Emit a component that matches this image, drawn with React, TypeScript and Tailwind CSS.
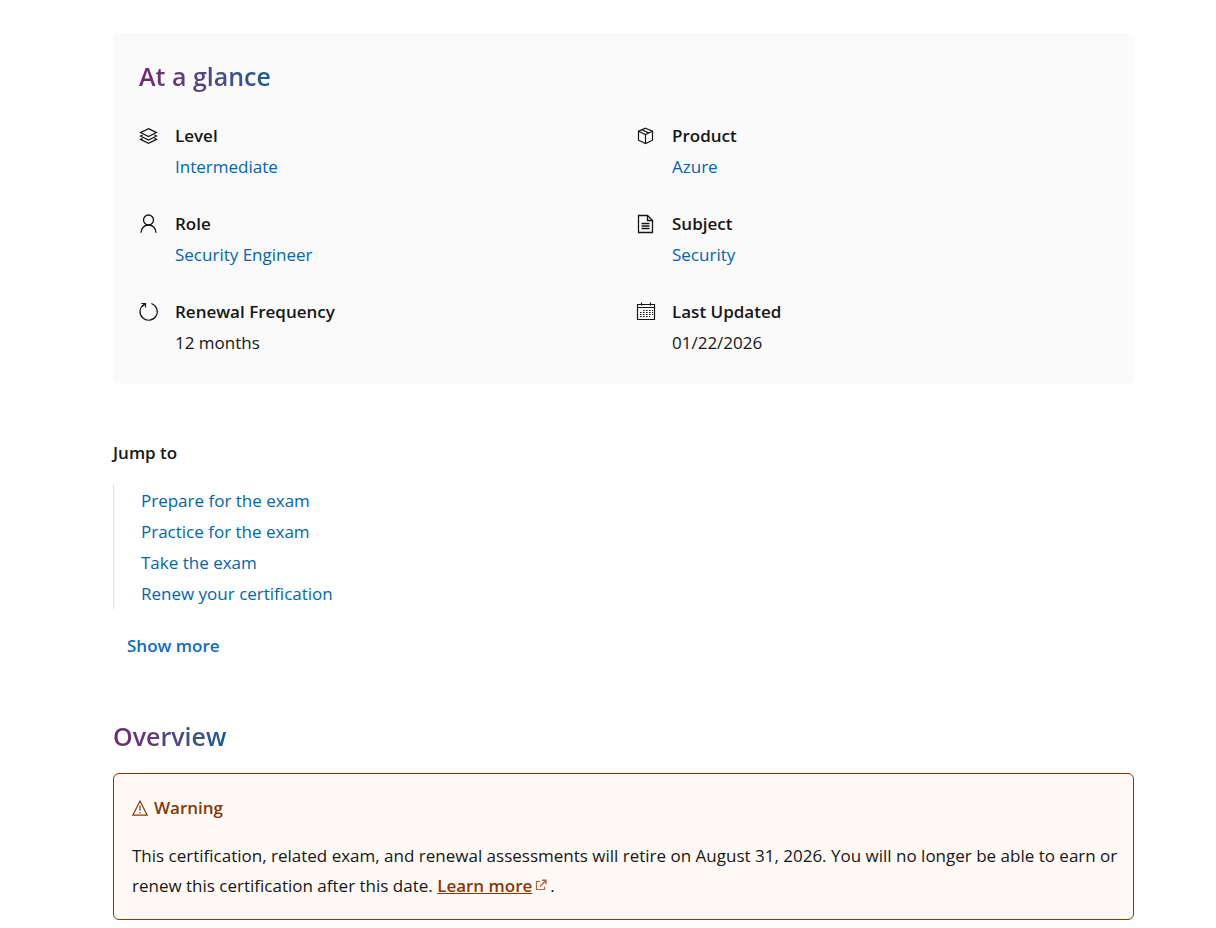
import React from 'react'

interface FactProps {
  icon: React.ReactNode
  label: string
  value: string
  href?: string
}

const iconProps = {
  viewBox: '0 0 20 20',
  fill: 'none',
  stroke: 'currentColor',
  'aria-hidden': true,
}

const LevelIcon = () => (
  <svg {...iconProps} className="w-5 h-5" strokeWidth={1.2}>
    <path d="M9.5 2.6 17.5 6.6 9.5 10.6 1.5 6.6z" />
    <path d="M3.6 9 1.5 10 9.5 14 17.5 10 15.4 9" />
    <path d="M3.6 12.4 1.5 13.4 9.5 17.4 17.5 13.4 15.4 12.4" />
  </svg>
)

const ProductIcon = () => (
  <svg {...iconProps} className="w-5 h-5" strokeWidth={1.2}>
    <path d="M9.5 2.2 16.5 5.2V14.2L9.5 17.6 2.5 14.2V5.2z" />
    <path d="M2.5 5.2 9.5 8.6 16.5 5.2M9.5 8.6V17.6M5.9 3.8 13 7.1" />
  </svg>
)

const RoleIcon = () => (
  <svg {...iconProps} className="w-5 h-5" strokeWidth={1.3}>
    <circle cx="9.5" cy="6" r="5" />
    <path d="M2 18.8C2 14.3 5.2 11 9.5 11S17 14.3 17 18.8" />
  </svg>
)

const SubjectIcon = () => (
  <svg {...iconProps} className="w-5 h-5" strokeWidth={1.3}>
    <path d="M2.5 1.5H11.5L16.5 6.5V18.5H2.5z" />
    <path d="M11.5 1.5V6.5H16.5M5.5 9.5H13.5M5.5 12H13.5M5.5 14.5H13.5" />
  </svg>
)

const RenewalIcon = () => (
  <svg {...iconProps} className="w-5 h-5" strokeWidth={1.2}>
    <path d="M12.4 1.5A8.6 8.6 0 1 1 5 2.4" />
    <path d="M2.4 1.5H6.5V5.6M6.3 1.7 3 4.6" />
  </svg>
)

const CalendarIcon = () => (
  <svg {...iconProps} className="w-5 h-5" strokeWidth={1.2}>
    <path d="M1.5 2.5H18.5V17.5H1.5zM1.5 5.5H18.5M5.5 0.5V3.5M14.5 0.5V3.5" />
    <path d="M7 8.5H17M4 10.5H17M4 12.5H17M4 14.5H14" strokeDasharray="1.6 1.4" />
  </svg>
)

const WarningIcon = () => (
  <svg viewBox="0 0 16 16" fill="none" stroke="currentColor" className="w-4 h-4" aria-hidden="true">
    <path d="M8 1 15.2 15.2H0.8z" strokeWidth={1.2} />
    <path d="M8 5.5V10.8M8 12V13.3" strokeWidth={1.2} />
  </svg>
)

const ExternalIcon = () => (
  <svg viewBox="0 0 12 12" fill="none" stroke="currentColor" className="inline w-3 h-3 mx-[3px] mb-1 text-[#8a3707] opacity-75" aria-hidden="true">
    <path d="M5 2.5H1.5V10.5H9.5V7.5" strokeWidth={1.2} />
    <path d="M7 1.2H11V5.2M10.8 1.4 4.8 7.4" strokeWidth={1.4} />
  </svg>
)

const facts: FactProps[] = [
  { icon: <LevelIcon />, label: 'Level', value: 'Intermediate', href: '#level' },
  { icon: <ProductIcon />, label: 'Product', value: 'Azure', href: '#product' },
  { icon: <RoleIcon />, label: 'Role', value: 'Security Engineer', href: '#role' },
  { icon: <SubjectIcon />, label: 'Subject', value: 'Security', href: '#subject' },
  { icon: <RenewalIcon />, label: 'Renewal Frequency', value: '12 months' },
  { icon: <CalendarIcon />, label: 'Last Updated', value: '01/22/2026' },
]

const jumpLinks = [
  { label: 'Prepare for the exam', href: '#prepare' },
  { label: 'Practice for the exam', href: '#practice' },
  { label: 'Take the exam', href: '#take' },
  { label: 'Renew your certification', href: '#renew' },
]

const GradientHeading: React.FC<{ children: React.ReactNode }> = ({ children }) => (
  <h2 className="w-fit text-[25px] leading-[34px] font-semibold text-transparent bg-clip-text bg-linear-to-r from-[#702573] to-[#0f5b90]">
    {children}
  </h2>
)

const Fact: React.FC<FactProps> = ({ icon, label, value, href }) => (
  <div className="flex gap-4">
    <div className="flex items-center h-[31px]">{icon}</div>
    <dl>
      <dt className="font-semibold">{label}</dt>
      <dd>
        {href ? <a href={href} className="text-[#0065b3] hover:underline">{value}</a> : value}
      </dd>
    </dl>
  </div>
)

export default function App() {
  return (
    <main className="pl-[113px] pr-[82px] pt-[33px] pb-2 bg-white text-[#161616] text-[17px] leading-[31px] font-['Open_Sans','Segoe_UI',sans-serif]">
      <section className="rounded-md bg-[#fafafa] p-[26px]">
        <GradientHeading>At a glance</GradientHeading>
        <div className="mt-[27px] grid grid-cols-2 gap-x-[25px] gap-y-[26px]">
          {facts.map((fact) => (
            <Fact key={fact.label} {...fact} />
          ))}
        </div>
      </section>

      <nav className="mt-[53px]" aria-labelledby="jump-to">
        <h3 id="jump-to" className="font-semibold">Jump to</h3>
        <ul className="mt-[17px] border-l border-[#e0e0e0] pl-[27px]">
          {jumpLinks.map((link) => (
            <li key={link.href}>
              <a href={link.href} className="text-[#0065b3] hover:underline">{link.label}</a>
            </li>
          ))}
        </ul>
        <button type="button" className="mt-[21px] px-[14px] font-semibold text-[#0f6cbd]">
          Show more
        </button>
      </nav>

      <section className="mt-[58px]">
        <GradientHeading>Overview</GradientHeading>
        <div className="mt-5 rounded-md border border-[#8a3707] bg-[#fff9f5] py-[18px] pl-[18px] pr-3">
          <p className="flex items-center gap-[6px] font-semibold text-[#8a3707]">
            <WarningIcon />
            Warning
          </p>
          <p className="mt-[18px] leading-[30px]">
            This certification, related exam, and renewal assessments will retire on August 31, 2026. You will no
            longer be able to earn or renew this certification after this date.{' '}
            <a href="#learn-more" className="font-semibold text-[#8a3707] underline">Learn more</a>
            <ExternalIcon />
            .
          </p>
        </div>
      </section>
    </main>
  )
}
